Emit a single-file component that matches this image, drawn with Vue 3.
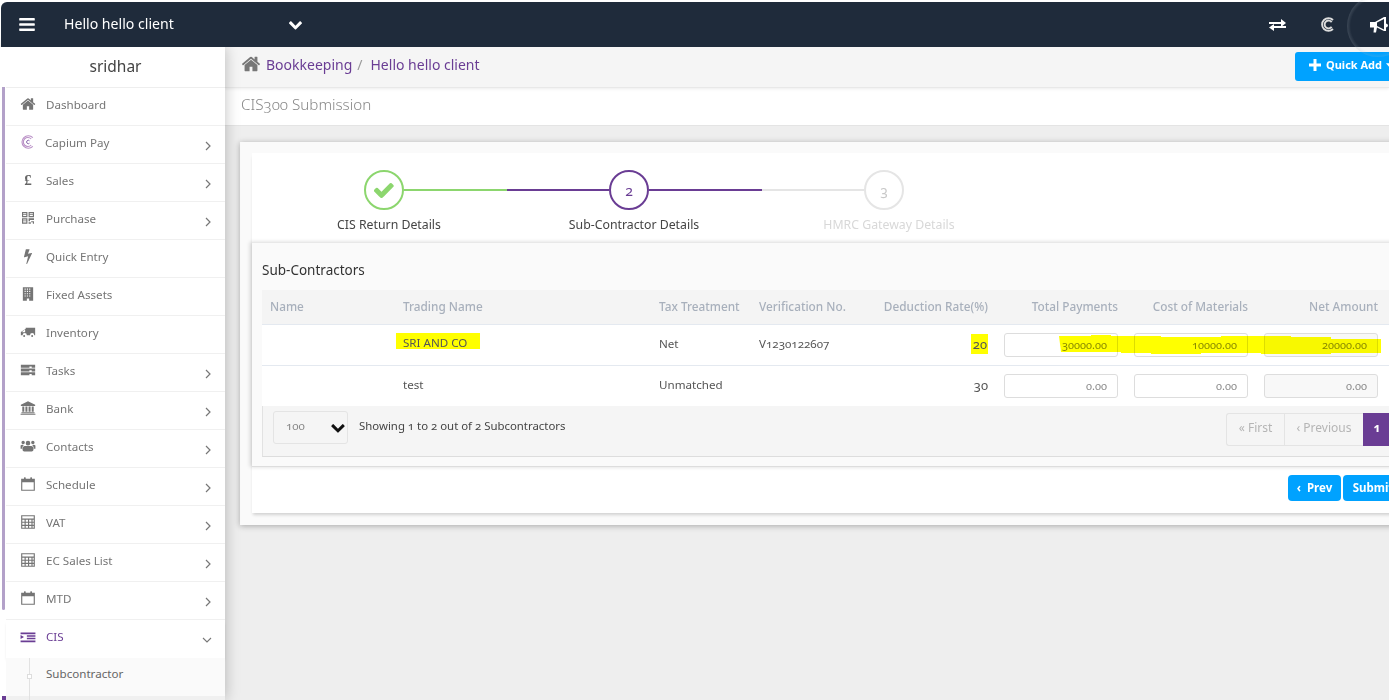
<script setup>
const paths = {
  home: 'M1472 992v480q0 26-19 45t-45 19h-384v-384h-256v384h-384q-26 0-45-19t-19-45v-480q0-1 .5-3t.5-3l575-474 575 474q1 2 1 6zm223-69l-62 74q-8 9-21 11h-3q-13 0-21-7l-692-577-692 577q-12 8-24 7-13-2-21-11l-62-74q-8-10-7-23.500t11-21.500l719-599q32-26 76-26t76 26l244 204v-195q0-14 9-23t23-9h192q14 0 23 9t9 23v408l219 182q10 8 11 21.500t-7 23.500z',
  bolt: 'M1333 566q18 20 7 44l-540 1157q-13 25-42 25-4 0-14-2-17-5-25.500-19t-4.500-30l197-808-406 101q-4 1-12 1-18 0-31-11-18-15-13-39l201-825q4-14 16-23t28-9h328q19 0 32 12.500t13 29.500q0 8-5 18l-171 463 396-98q8-2 12-2 19 0 34 15z',
  qr: 'M224 224h608v576h-608zM352 352v128h352v-128zM352 560v112h352v-112zM960 224h608v576h-608zM1088 352v128h352v-128zM1088 560v112h352v-112zM224 928h608v608h-608zM352 1056v128h352v-128zM352 1264v144h352v-144zM960 928h608v192h-448v128h-160zM1248 1248h320v288h-128v-160h-192zM960 1376h256v160h-256z',
  building: 'M320 128h1152v1536h-448v-256h-256v256h-448zM512 288v128h128v-128zM768 288v128h128v-128zM1024 288v128h128v-128zM512 544v128h128v-128zM768 544v128h128v-128zM1024 544v128h128v-128zM512 800v128h128v-128zM768 800v128h128v-128zM1024 800v128h128v-128zM512 1056v128h128v-128zM768 1056v128h128v-128zM1024 1056v128h128v-128z',
  truck: 'M576 1344a112 112 0 1 0-224 0a112 112 0 1 0 224 0zM1472 1344a112 112 0 1 0-224 0a112 112 0 1 0 224 0zM640 416h1056v832h-96a240 240 0 0 0-480 0h-352a240 240 0 0 0-480 0h-192v-352l544-352zM512 640l-256 224v64h320v-288z',
  tasks: 'M96 320h1600v320h-384v-128h-256v128h-960zM96 736h1600v320h-384v-128h-256v128h-960zM96 1152h1600v320h-384v-128h-256v128h-960z',
  bank: 'M896 128l800 416v128h-1600v-128zM256 736h224v576h-224zM608 736h224v576h-224zM960 736h224v576h-224zM1312 736h224v576h-224zM160 1376h1472v96h-1472zM64 1536h1664v128h-1664z',
  users: 'M896 832a256 256 0 1 0 0-512a256 256 0 1 0 0 512zM352 704a192 192 0 1 0 0-384a192 192 0 1 0 0 384zM1440 704a192 192 0 1 0 0-384a192 192 0 1 0 0 384zM512 896h768q224 32 224 320v128q0 128-192 160h-832q-192-32-192-160v-128q0-288 224-320zM64 832q60-64 224-64q64 16 128 64q-96 48-128 160q-32 96-32 224h-192v-256zM1728 832q-60-64-224-64q-64 16-128 64q96 48 128 160q32 96 32 224h192v-256z',
  calendar: 'M128 320h320v-128q0-64 64-64h64q64 0 64 64v128h512v-128q0-64 64-64h64q64 0 64 64v128h320v1344h-1536zM256 704v832h1280v-832z',
  calc: 'M128 128h1536v1536h-1536zM256 256v256h1280v-256zM256 640v224h256v-224zM640 640v224h256v-224zM1024 640v224h256v-224zM1408 640v224h128v-224zM256 992v224h256v-224zM640 992v224h256v-224zM1024 992v224h256v-224zM1408 992v224h128v-224zM256 1344v192h256v-192zM640 1344v192h256v-192zM1024 1344v192h256v-192zM1408 1344v192h128v-192z',
  indent: 'M64 384h1664v192h-1664zM768 704h960v160h-960zM768 992h960v160h-960zM64 1280h1664v192h-1664zM64 672l384 224l-384 224z'
}
const down = 'M1683 808l-742 741q-19 19-45 19t-45-19l-742-741q-19-19-19-45.500t19-45.500l166-165q19-19 45-19t45 19l531 531 531-531q19-19 45-19t45 19l166 165q19 19 19 45.500t-19 45.500z'
const menu = [
  { label: 'Dashboard', icon: 'home' },
  { label: 'Capium Pay', logo: true, more: true },
  { label: 'Sales', pound: true, more: true },
  { label: 'Purchase', icon: 'qr', more: true },
  { label: 'Quick Entry', icon: 'bolt' },
  { label: 'Fixed Assets', icon: 'building' },
  { label: 'Inventory', icon: 'truck' },
  { label: 'Tasks', icon: 'tasks', more: true },
  { label: 'Bank', icon: 'bank', more: true },
  { label: 'Contacts', icon: 'users', more: true },
  { label: 'Schedule', icon: 'calendar', more: true },
  { label: 'VAT', icon: 'calc', more: true },
  { label: 'EC Sales List', icon: 'calc', more: true },
  { label: 'MTD', icon: 'calendar', more: true }
]
const heads = ['Name', 'Trading Name', 'Tax Treatment', 'Verification No.', 'Deduction Rate(%)', 'Total Payments', 'Cost of Materials', 'Net Amount']
const rows = [
  { name: 'SRI AND CO', tax: 'Net', ver: 'V1230122607', rate: '20', total: '30000.00', cost: '10000.00', net: '20000.00', mark: true },
  { name: 'test', tax: 'Unmatched', ver: '', rate: '30', total: '0.00', cost: '0.00', net: '0.00', mark: false }
]
</script>

<template>
  <div class="page">
    <header class="topbar">
      <svg class="bars" viewBox="128 256 1536 1280"><path d="M1664 1344v128q0 26-19 45t-45 19h-1408q-26 0-45-19t-19-45v-128q0-26 19-45t45-19h1408q26 0 45 19t19 45zm0-512v128q0 26-19 45t-45 19h-1408q-26 0-45-19t-19-45v-128q0-26 19-45t45-19h1408q26 0 45 19t19 45zm0-512v128q0 26-19 45t-45 19h-1408q-26 0-45-19t-19-45v-128q0-26 19-45t45-19h1408q26 0 45 19t19 45z" /></svg>
      <span class="client">Hello hello client</span>
      <svg class="client-caret" viewBox="100 400 1600 1200"><path :d="down" /></svg>
      <div class="top-icons">
        <svg class="swap" viewBox="0 0 17 12"><path d="M0 3h12V0l5 4-5 4V5H0zM17 7v2H5v3L0 8.500 5 5v2z" /></svg>
        <svg class="c-mark" viewBox="0 0 16 16"><path d="M12.800 3.200A6.800 6.800 0 1 0 12.800 12.800" /><path d="M11.400 5.400A4.200 4.200 0 1 0 11.400 10.600" /></svg>
        <svg class="horn" viewBox="0 0 18 16"><path d="M0 5h5l9-5h2v6.500q2 .5 2 2t-2 2V14h-2l-7-3.500-1 5H3.500l.5-5H0zM7 5.500v3.500l7 3.500V2z" fill-rule="evenodd" /></svg>
      </div>
      <div class="halo"></div>
    </header>

    <div class="body">
      <aside class="sidebar">
        <div class="rail">
          <div class="rail-thumb"></div>
          <div class="rail-active"></div>
        </div>
        <nav class="menu">
          <div class="user">sridhar</div>
          <div v-for="item in menu" :key="item.label" class="item">
            <span class="ico">
              <svg v-if="item.icon" viewBox="0 0 1792 1792"><path :d="paths[item.icon]" fill-rule="evenodd" /></svg>
              <svg v-else-if="item.logo" class="logo" viewBox="0 0 14 14"><path d="M11.800 2.600A6.300 6.300 0 1 0 11.800 11.400" /><path d="M10.200 4A4.500 4.500 0 1 0 10.200 10" /><path class="logo-c" d="M8.500 5.800A1.700 1.700 0 1 0 8.500 8.200" /></svg>
              <b v-else class="pound">£</b>
            </span>
            <span class="item-label" :class="{ shifted: item.logo }">{{ item.label }}</span>
            <svg v-if="item.more" class="angle" viewBox="0 0 6 10"><path d="M1 1l4 4-4 4" /></svg>
          </div>
          <div class="item active">
            <span class="ico"><svg viewBox="0 0 1792 1792"><path :d="paths.indent" fill-rule="evenodd" /></svg></span>
            <span class="item-label">CIS</span>
            <svg class="angle-down" viewBox="0 0 10 6"><path d="M1 1l4 4 4-4" /></svg>
          </div>
          <div class="subs">
            <div class="sub">Subcontractor<i class="node"></i></div>
            <div class="sub next"></div>
          </div>
        </nav>
      </aside>

      <main class="main">
        <div class="crumbs">
          <svg class="crumb-home" viewBox="0 0 1792 1792"><path :d="paths.home" /></svg>
          <span class="crumb">Bookkeeping</span>
          <span class="slash">/</span>
          <span class="crumb">Hello hello client</span>
          <button class="quick" type="button"><svg class="plus" viewBox="0 0 12 12"><path d="M4.500 0h3v4.500H12v3H7.500V12h-3V7.500H0v-3h4.500z" /></svg>Quick Add<svg class="quick-caret" viewBox="0 0 10 6"><path d="M0 0h10L5 6z" /></svg></button>
        </div>
        <div class="title">CIS300 Submission</div>

        <section class="outer">
          <div class="inner">
            <div class="stepper">
              <div class="step first">
                <div class="step-head">
                  <span class="circle done"><svg viewBox="130 280 1560 1200"><path d="M1671 566q0 40-28 68l-724 724-136 136q-28 28-68 28t-68-28l-136-136-362-362q-28-28-28-68t28-68l136-136q28-28 68-28t68 28l294 295 656-657q28-28 68-28t68 28l136 136q28 28 28 68z" /></svg></span>
                  <span class="line line-a"></span>
                </div>
                <div class="step-label">CIS Return Details</div>
              </div>
              <div class="step second">
                <div class="step-head">
                  <span class="circle current">2</span>
                  <span class="line line-b"></span>
                </div>
                <div class="step-label">Sub-Contractor Details</div>
              </div>
              <div class="step third">
                <div class="step-head">
                  <span class="circle todo">3</span>
                </div>
                <div class="step-label muted">HMRC Gateway Details</div>
              </div>
            </div>

            <div class="panel">
              <h3 class="panel-title">Sub-Contractors</h3>
              <div class="table">
                <div class="grid head">
                  <span v-for="(h, i) in heads" :key="h" :class="{ right: i > 3 }">{{ h }}</span>
                </div>
                <div v-for="(r, i) in rows" :key="r.name" class="grid row" :class="{ last: i === rows.length - 1 }">
                  <span class="cell"></span>
                  <span class="cell"><em :class="{ hl: r.mark }" class="trade">{{ r.name }}</em></span>
                  <span class="cell">{{ r.tax }}</span>
                  <span class="cell">{{ r.ver }}</span>
                  <span class="cell right rate"><em :class="{ hl: r.mark }" class="rate-v">{{ r.rate }}</em></span>
                  <span><div class="amount">{{ r.total }}</div></span>
                  <span><div class="amount">{{ r.cost }}</div></span>
                  <span><div class="amount off">{{ r.net }}</div></span>
                </div>
                <svg class="marker" viewBox="0 0 322 20"><path d="M0 1h32v-1h20v1h50v1h60v-1h70v1h40v2h50v14h-50v1h-70v-1h-60v1h-50v-1h-30v-1h-60z" /></svg>
                <div class="foot">
                  <div class="select"><span>100</span><svg viewBox="100 400 1600 1200"><path :d="down" /></svg></div>
                  <span class="showing">Showing 1 to 2 out of 2 Subcontractors</span>
                  <div class="pager">
                    <span class="pg pg-first">« First</span>
                    <span class="pg pg-prev">‹ Previous</span>
                    <span class="pg pg-on">1</span>
                  </div>
                </div>
              </div>
            </div>

            <div class="actions">
              <button class="btn" type="button">‹&nbsp; Prev</button>
              <button class="btn" type="button">Submit</button>
            </div>
          </div>
        </section>
      </main>
    </div>
  </div>
</template>

<style scoped>
.page {
  width: 1389px;
  height: 700px;
  overflow: hidden;
  position: relative;
  padding-top: 2px;
  box-sizing: border-box;
  background: #fff;
  font-family: "Noto Sans", "Open Sans", sans-serif;
  font-variant-numeric: oldstyle-nums;
  display: flex;
  flex-direction: column;
}
svg { fill: currentColor; display: block; }

.topbar {
  height: 45px;
  flex: none;
  margin-left: 1px;
  border-top-left-radius: 6px;
  background: #1f2b3b;
  color: #fff;
  display: flex;
  align-items: center;
  position: relative;
  z-index: 3;
}
.bars { width: 16px; height: 13px; margin-left: 18px; }
.client { margin-left: 29px; font-size: 14.100px; width: 225px; padding-bottom: 3px; }
.client-caret { width: 13px; height: 10px; }
.top-icons { margin-left: auto; display: flex; align-items: center; }
.swap { width: 17px; height: 12px; }
.c-mark { width: 15px; height: 15px; margin-left: 35px; fill: none; stroke: #ddd; stroke-width: 2; }
.horn { width: 18px; height: 16px; margin-left: 34px; margin-right: 1px; }
.halo {
  position: absolute;
  left: 1346px;
  top: -7px;
  width: 62px;
  height: 62px;
  border-radius: 50%;
  background: radial-gradient(circle, rgba(255,255,255,0) 62%, rgba(170,180,190,.7) 92%, rgba(200,205,215,.35) 100%);
  pointer-events: none;
}

.body { flex: 1; display: flex; min-height: 0; }

.sidebar {
  width: 225px;
  flex: none;
  display: flex;
  background: #fff;
  position: relative;
  z-index: 2;
  box-shadow: 0 0 14px rgba(0,0,0,.25);
}
.rail { width: 6px; flex: none; display: flex; flex-direction: column; }
.rail-thumb {
  width: 3px;
  height: 523px;
  margin: 40px 0 0 2px;
  background: #b3a1c9;
  border-radius: 0 0 2px 2px;
}
.rail-active {
  width: 4px;
  height: 4px;
  margin: auto 0 0 2px;
  background: #6a3d94;
}
.menu { flex: 1; min-width: 0; }
.user {
  height: 41px;
  box-sizing: border-box;
  border-bottom: 1px solid #eee;
  text-align: center;
  font-size: 15.500px;
  line-height: 39px;
  color: #444;
}
.item {
  height: 38px;
  box-sizing: border-box;
  padding: 0 14px 5px 14px;
  border-bottom: 1px solid #f0f0f0;
  display: flex;
  align-items: center;
  color: #757575;
  font-size: 11.600px;
}
.ico {
  width: 16px;
  height: 16px;
  flex: none;
  display: flex;
  align-items: center;
  justify-content: center;
}
.ico svg { width: 16px; height: 16px; }
.ico .logo { width: 14px; height: 14px; fill: none; stroke: #b98fc6; stroke-width: 1.100; }
.ico .logo .logo-c { stroke: #6a3d94; stroke-width: .8; }
.pound { font-size: 15px; line-height: 16px; font-weight: 700; color: #666; font-family: "Liberation Serif", serif; }
.item-label { margin-left: 10px; }
.item-label.shifted { margin-left: 9px; }
.angle { width: 6px; height: 10px; margin: 7px 0 0 auto; fill: none; stroke: #777; stroke-width: 1.200; position: relative; }
.active { color: #6a3d94; border-bottom: none; box-shadow: 0 3px 3px -1px rgba(0,0,0,.14); position: relative; }
.angle-down { width: 10px; height: 6px; margin: 7px 0 0 auto; fill: none; stroke: #777; stroke-width: 1.100; position: relative; left: 1px; }

.subs { position: relative; }
.subs::before {
  content: "";
  position: absolute;
  z-index: 1;
  left: 23px;
  top: 0;
  bottom: 0;
  width: 1px;
  background: #e2e2e2;
}
.sub {
  height: 38px;
  box-sizing: border-box;
  padding: 0 0 8px 40px;
  display: flex;
  align-items: center;
  background: #fafafa;
  color: #666;
  font-size: 11.600px;
  position: relative;
}
.sub.next { background: #f0f0f0; }
.node {
  position: absolute;
  z-index: 2;
  left: 21px;
  top: 16px;
  width: 3px;
  height: 3px;
  border: 1px solid #ddd;
  background: #fff;
}

.main { flex: 1; min-width: 0; background: #eee; overflow: hidden; }
.crumbs {
  height: 34px;
  padding: 0 0 6px 16px;
  border-bottom: 1px solid #e8e8e8;
  background: #f5f5f5;
  display: flex;
  align-items: center;
  font-size: 14px;
  color: #999;
  box-shadow: 0 1px 3px rgba(0,0,0,.08);
  position: relative;
}
.crumb-home { width: 20px; height: 20px; color: #777; margin-right: 5px; }
.crumb { color: #6a3d94; }
.slash { margin: 0 8px 0 5px; }
.quick {
  position: absolute;
  left: 1070px;
  top: 5px;
  width: 110px;
  height: 29px;
  border: 0;
  border-radius: 3px;
  background: #00a2ff;
  color: #fff;
  font: 700 11px "Noto Sans", sans-serif;
  display: flex;
  align-items: center;
  padding: 0 0 4px 14px;
}
.plus { width: 12px; height: 12px; margin-right: 5px; }
.quick-caret { width: 6px; height: 4px; margin-left: 4px; }
.title {
  height: 38px;
  box-sizing: border-box;
  background: #fff;
  border-bottom: 1px solid #e4e4e4;
  padding: 3px 0 0 16px;
  font-size: 15.200px;
  line-height: 26px;
  color: #888;
  font-weight: 300;
}

.outer {
  width: 1185px;
  margin: 16px 0 0 15px;
  padding: 11px 12px 12px;
  box-sizing: border-box;
  background: #fafafa;
  box-shadow: 0 1px 6px rgba(0,0,0,.3);
}
.inner {
  background: #fff;
  box-shadow: 0 3px 3px -1px rgba(0,0,0,.16);
}
.stepper {
  height: 89px;
  box-sizing: border-box;
  padding: 17px 0 0 112px;
  display: flex;
}
.step.first { width: 245px; }
.step.second { width: 255px; }
.step.third { width: 40px; }
.step-head { display: flex; align-items: center; height: 40px; }
.circle {
  width: 40px;
  height: 40px;
  box-sizing: border-box;
  border-radius: 50%;
  border: 2px solid;
  display: flex;
  align-items: center;
  justify-content: center;
  font-size: 14px;
  flex: none;
}
.done { border-color: #8cd66e; color: #8cd66e; }
.done svg { width: 20px; height: 16px; }
.current { border-color: #6a3d94; color: #6a3d94; }
.todo { border-color: #e5e5e5; color: #c8c8c8; }
.line { flex: 1; height: 2px; }
.line-a { background: linear-gradient(to right, #8cd66e 50%, #6a3d94 50%); }
.line-b { background: linear-gradient(to right, #6a3d94 52.500%, #e5e5e5 52.500%); }
.step-label {
  width: 200px;
  margin: 6px 0 0 -75px;
  text-align: center;
  font-size: 12.300px;
  line-height: 18px;
  color: #444;
}
.step-label.muted { color: #d8d8d8; }

.panel {
  background: #fafafa;
  border-top: 1px solid #e8e8e8;
  border-bottom: 1px solid #ddd;
  padding: 0 17px 9px 10px;
  box-shadow: -2px 0 4px rgba(0,0,0,.15);
}
.panel-title {
  margin: 0;
  height: 47px;
  padding-top: 17px;
  box-sizing: border-box;
  font-size: 13.500px;
  line-height: 20px;
  font-weight: 400;
  color: #333;
}
.table { position: relative; }
.grid {
  display: grid;
  grid-template-columns: 133px 256px 100px 120px 125px 130px 130px 140px;
  align-items: center;
  font-size: 11.600px;
}
.grid > span { padding: 0 8px; display: block; }
.right { text-align: right; }
.head {
  height: 35px;
  box-sizing: border-box;
  border-bottom: 1px solid #e4e9f0;
  background: #f4f4f4;
  color: #a8b0bc;
  font-size: 11.800px;
  font-weight: 500;
}
.grid.head > span { padding-bottom: 3px; }
.head > span:nth-child(n+6) { text-align: right; }
.grid.head > span:last-child { padding-right: 18px; }
.row {
  height: 41px;
  box-sizing: border-box;
  background: #fff;
  border-bottom: 1px solid #e4e9f0;
  color: #555;
}
.row.last { border-bottom: none; height: 40px; }
.grid > .cell { padding-bottom: 3px; }
.trade, .rate-v { font-style: normal; }
.hl { background: #ffff00; }
.trade.hl {
  display: block;
  width: fit-content;
  padding: 4px 13px 0 7px;
  margin: 0 0 5px -7px;
  line-height: 12px;
}
.rate { font-size: 13px; }
.rate-v.hl { padding: 1px 1px 1px 2px; }
.amount {
  width: 114px;
  height: 24px;
  box-sizing: border-box;
  border: 1px solid #ddd;
  border-radius: 3px;
  background: #fff;
  color: #888;
  font-size: 11px;
  line-height: 22px;
  text-align: right;
  padding-right: 10px;
}
.amount.off { background: #f8f8f8; }
.marker {
  position: absolute;
  left: 797px;
  top: 45px;
  width: 322px;
  height: 20px;
  color: #ffff00;
  mix-blend-mode: multiply;
  pointer-events: none;
}
.foot {
  height: 51px;
  box-sizing: border-box;
  background: #f5f5f5;
  border-left: 1px solid #e2e2e2;
  border-bottom: 1px solid #ddd;
  display: flex;
  align-items: flex-start;
  padding: 5px 5px 0 10px;
}
.select {
  width: 75px;
  height: 33px;
  box-sizing: border-box;
  border: 1px solid #e4e4e4;
  border-radius: 3px;
  display: flex;
  align-items: center;
  justify-content: space-between;
  padding: 0 2px 0 12px;
  color: #888;
  font-size: 11.500px;
}
.select span { padding-bottom: 5px; }
.select svg { width: 14px; height: 10px; color: #111; }
.showing { margin: 6px 0 0 11px; font-size: 11.400px; line-height: 18px; color: #444; }
.pager {
  margin-left: auto;
  margin-top: 2px;
  display: flex;
  height: 33px;
  font-size: 12px;
}
.pg {
  box-sizing: border-box;
  border: 1px solid #e4e4e4;
  border-right: 0;
  color: #b5b5b5;
  display: flex;
  align-items: center;
  justify-content: center;
  padding-bottom: 5px;
}
.pg-first { width: 58px; border-radius: 3px 0 0 3px; }
.pg-prev { width: 79px; }
.pg-on { width: 28px; background: #6a3d94; color: #fff; border: 0; font-weight: 700; font-size: 12px; }

.actions {
  height: 46px;
  box-sizing: border-box;
  padding: 8px 10px 0 0;
  display: flex;
  justify-content: flex-end;
  gap: 2px;
}
.btn {
  height: 26px;
  border: 0;
  border-radius: 4px;
  background: #00a2ff;
  color: #fff;
  font: 700 11.500px "Noto Sans", sans-serif;
  padding: 0 0 2px;
  width: 53px;
}
.btn:last-child { width: 60px; }
</style>

<style>
html, body { margin: 0; background: #fff; }
</style>
